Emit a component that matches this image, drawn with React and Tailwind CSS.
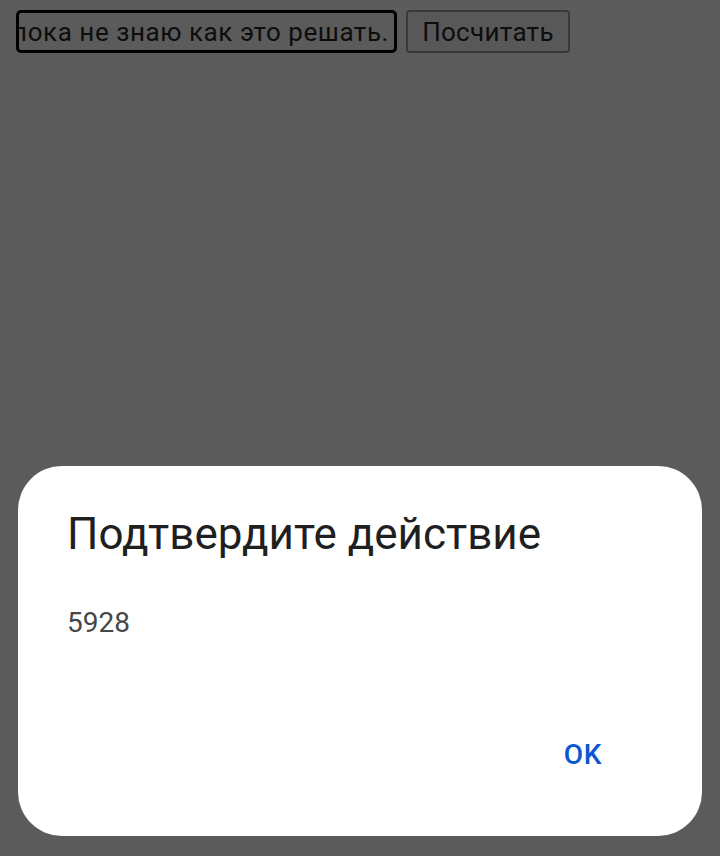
import React from "react";

const App = () => {
  return (
    <div
      className="min-h-[856px] w-full bg-[#5b5b5b] flex flex-col"
      style={{ fontFamily: "Roboto, 'Noto Sans', sans-serif" }}
    >
      {/* top form row, dimmed by the dialog scrim */}
      <div className="flex items-center gap-[9px] pl-4 pt-[10px]">
        <div className="w-[381px] h-[43px] border-[3px] border-black rounded-[5px] overflow-hidden flex justify-end items-center pr-[5px]">
          <span className="whitespace-nowrap text-[26px] leading-[30px] tracking-[0.55px] text-[#0d0d0d]">
            пока не знаю как это решать.
          </span>
        </div>
        <button className="w-[164px] h-[43px] border-2 border-[#383838] rounded-[4px] bg-[#585858] text-[26px] leading-[30px] tracking-[0.3px] text-[#0d0d0d]">
          Посчитать
        </button>
      </div>

      {/* dialog */}
      <div className="mt-[413px] mx-[18px] h-[370px] bg-white rounded-[44px] flex flex-col pt-[42px] pl-[49px]">
        <h1 className="text-[44px] leading-[52px] text-[#1f1f1f]">
          Подтвердите действие
        </h1>
        <p className="mt-[47px] text-[28px] leading-[32px] text-[#444746]">
          5928
        </p>
        <div className="mt-auto mb-[65px] flex justify-end pr-[100px]">
          <button className="text-[28px] leading-[32px] font-medium tracking-[0.6px] text-[#0b57d0]">
            OK
          </button>
        </div>
      </div>
    </div>
  );
};

export default App;
